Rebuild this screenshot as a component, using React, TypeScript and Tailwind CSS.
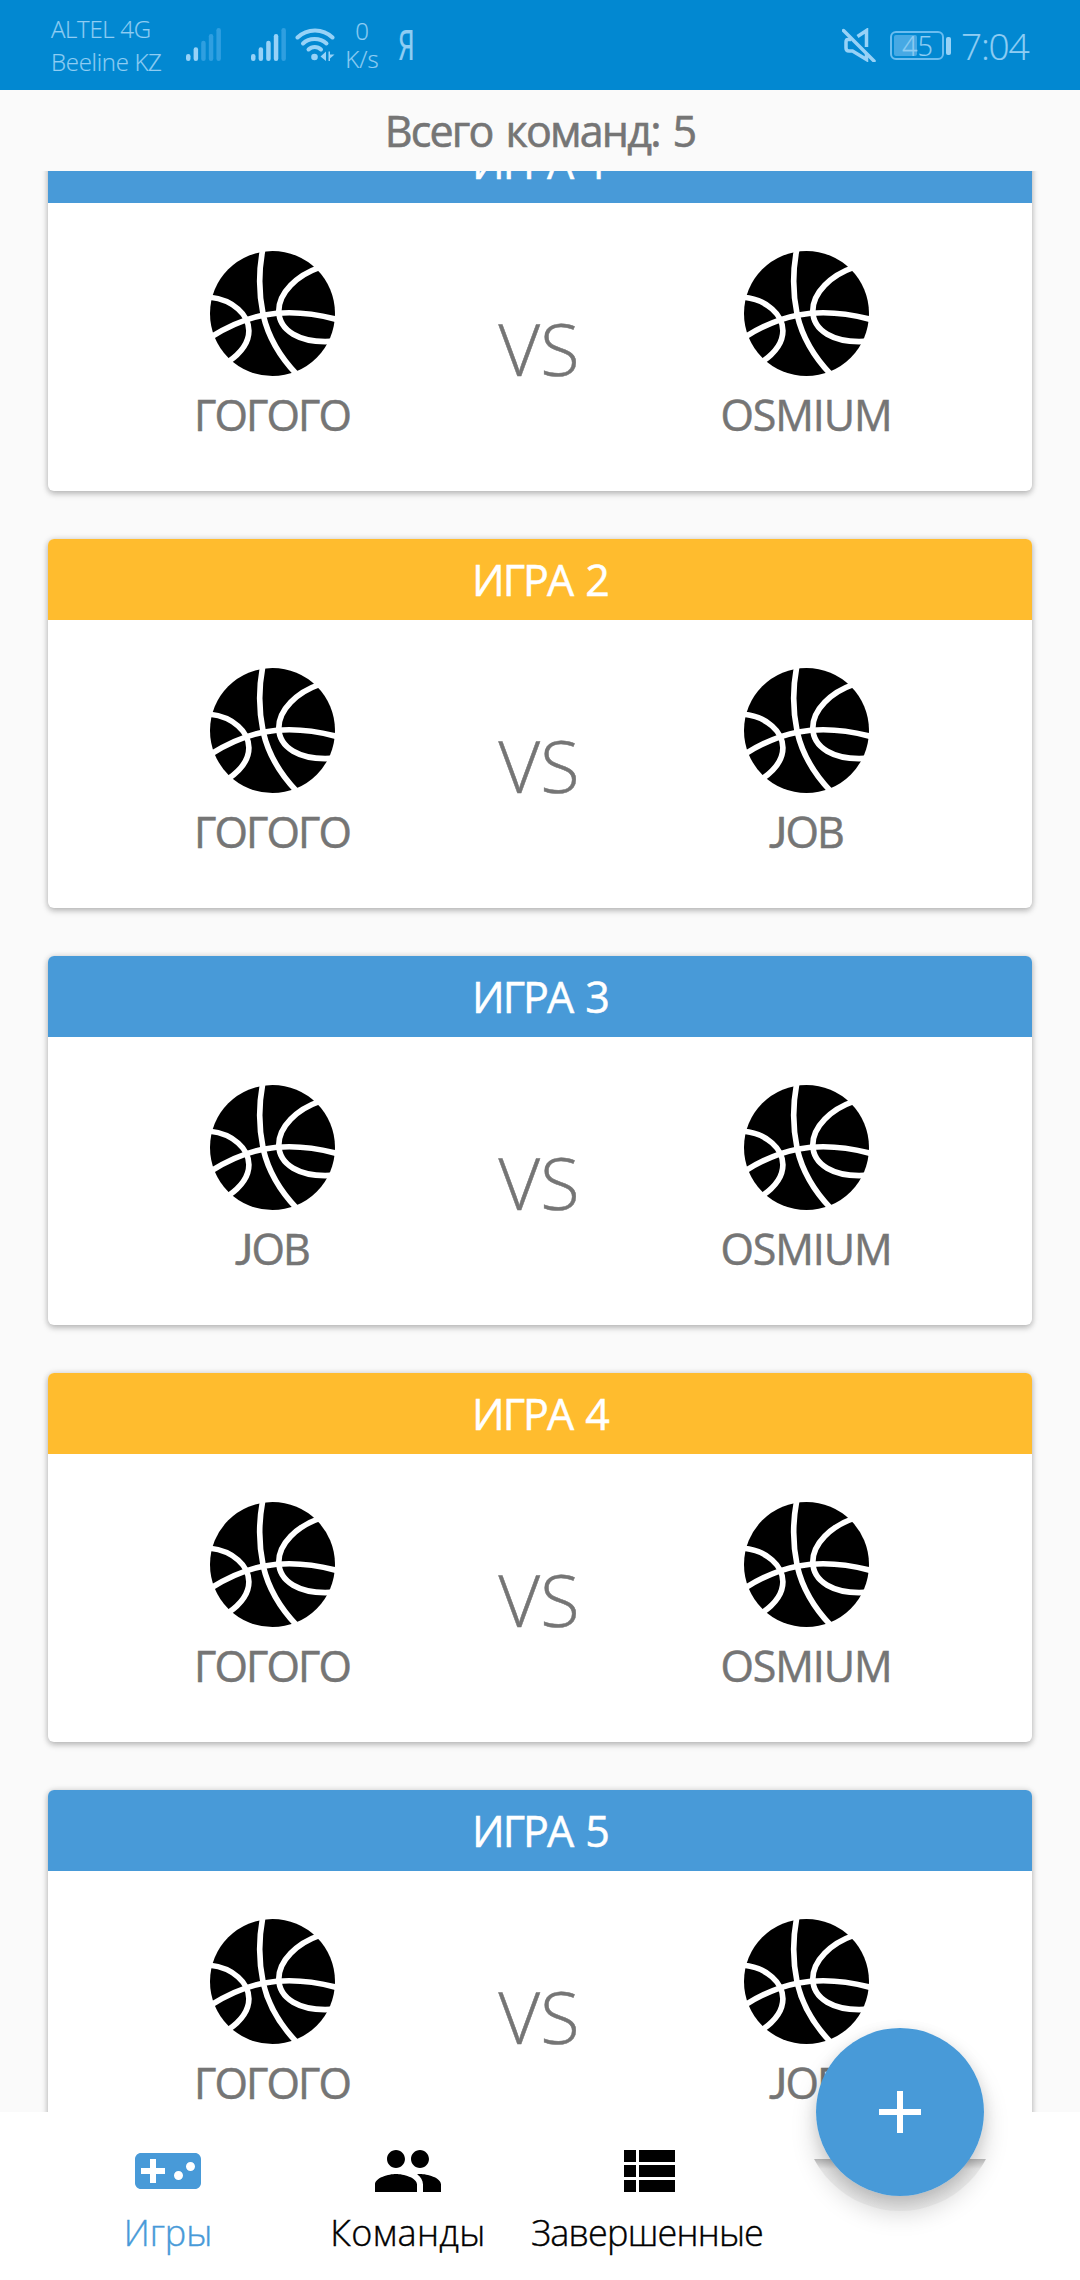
import React from 'react';

const FONT = '"Open Sans", "Noto Sans", sans-serif';

function Ball() {
  return (
    <svg viewBox="0 0 376 376" className="size-[125px]" fill="none">
      <circle cx="188" cy="188" r="188" fill="#000" />
      <g stroke="#fff" strokeWidth="17">
        <path d="M159 -6C146 60 147 130 160 192C176 262 210 318 262 372" />
        <path d="M4 258C100 198 210 160 382 206" />
        <path d="M-2 139C70 146 117 193 117 240C117 280 92 308 54 334" />
        <path d="M328 50C262 73 207 125 207 180C207 240 270 277 364 272" />
      </g>
    </svg>
  );
}

const TRACKING: Record<string, string> = {
  'ГОГОГО': 'tracking-[-1.9px]',
  OSMIUM: 'tracking-[-1.1px]',
  JOB: 'tracking-[-1.8px]',
};

function Team({ name }: { name: string }) {
  return (
    <div className="flex w-[450px] flex-col items-center">
      <Ball />
      <div className={`mt-[10px] text-[43px] leading-[58px] text-[#757575] [-webkit-text-stroke:0.5px_currentColor] ${TRACKING[name]}`}>
        {name[0] === 'J' ? (
          <>
            <span className="font-[Lato]">J</span>
            {name.slice(1)}
          </>
        ) : (
          name
        )}
      </div>
    </div>
  );
}

function Game({ n, a, b }: { n: number; a: string; b: string }) {
  return (
    <div className="h-[369px] shrink-0 rounded-[6px] bg-white shadow-[0_3px_6px_rgba(0,0,0,0.22),0_0_6px_rgba(0,0,0,0.14)]">
      <div className={`flex h-[81px] items-center justify-center rounded-t-[6px] pt-[2px] text-[43px] tracking-[-2px] text-white [word-spacing:4px] [-webkit-text-stroke:0.5px_currentColor] ${n % 2 ? 'bg-[#489ad8]' : 'bg-[#ffbc2e]'}`}>
        <span>{`ИГРА ${n}`}</span>
      </div>
      <div className="-ml-px flex pt-[48px]">
        <Team name={a} />
        <div className="flex w-[84px] justify-center pt-[48px] text-[72px] font-light leading-[98px] text-[#757575] [-webkit-text-stroke:0.5px_currentColor]">VS</div>
        <Team name={b} />
      </div>
    </div>
  );
}

function Signal({ on }: { on: number }) {
  const tops = [26, 19.3, 12.7, 6, 0];
  return (
    <svg viewBox="0 0 35 33" className="h-[33px] w-[35px]">
      {tops.map((t, i) => (
        <rect key={i} x={i * 7.6} y={t} width="4.5" height={33 - t} rx="2.2" fill={i < on ? '#97d2f7' : '#2f9fe0'} />
      ))}
    </svg>
  );
}

function StatusBar() {
  return (
    <div className="flex h-[90px] shrink-0 bg-[#0288d1] font-light text-[#8fcdf3] [-webkit-text-stroke:0.2px_currentColor]">
      <div className="ml-[51px] flex w-[135px] flex-col pt-[12px] text-[24px] leading-[33px] tracking-[-0.3px] whitespace-nowrap">
        <span>ALTEL 4G</span>
        <span>Beeline KZ</span>
      </div>
      <div className="flex w-[65px] pt-[28px]"><Signal on={2} /></div>
      <div className="flex w-[44px] pt-[28px]"><Signal on={4} /></div>
      <svg viewBox="0 0 40 33" className="mt-[28px] h-[33px] w-[40px]" fill="none" stroke="#97d2f7" strokeWidth="4" strokeLinecap="round">
        <path d="M2.5 9.5C12 0 28 0 37.500 9.500" />
        <path d="M8 15.500C14 9.500 25 9.500 31.500 15.500" />
        <path d="M13.500 21.500C17 18 22.500 18 26 21.500" />
        <circle cx="19.500" cy="29" r="3.300" fill="#97d2f7" stroke="none" />
        <path d="M31 23.500V33L25.500 28.500ZM33.500 23.500V33H35V30.500L39.500 26.500H35V23.500Z" fill="#97d2f7" stroke="none" />
      </svg>
      <div className="ml-[6px] flex w-[42px] flex-col items-center pt-[17px] text-[24px] leading-[28px]">
        <span>0</span>
        <span>K/s</span>
      </div>
      <div className="ml-[15px] w-[20px] pt-[18px]">
        <div className="origin-left scale-x-[0.62] font-[Roboto] text-[42px] font-normal leading-[56px]">Я</div>
      </div>
      <svg viewBox="0 0 34 34" className="mt-[28px] ml-auto size-[34px]" fill="none" stroke="#97d2f7" strokeWidth="3.500">
        <path d="M1.500 2.500L32 33" strokeLinecap="round" />
        <path d="M9 11.500H6Q4 11.500 4 14V20Q4 23 7 23H10.500L24.500 31.500V26M15.500 8.500L24.500 2.500V19" />
      </svg>
      <div className="mt-[31px] ml-[14px] flex h-[29px] w-[54px] items-center rounded-[6px] border-2 border-[#6bbdf0] pl-[2px]">
        <div className="h-[21px] w-[23px] shrink-0 rounded-[2px] bg-[#47a9e4]" />
        <div className="-ml-[15px] text-[27px] leading-[29px]">45</div>
      </div>
      <div className="mt-[37px] ml-[2px] h-[18px] w-[5px] rounded-[2px] bg-[#97d2f7]" />
      <div className="mr-[50px] ml-[10px] w-[69px] pt-[21px] text-[37px] leading-[50px] tracking-[-1.2px] whitespace-nowrap">7:04</div>
    </div>
  );
}

function Tab({ label, d, active, tracking = '' }: { label: string; d: string; active?: boolean; tracking?: string }) {
  return (
    <div className={`flex w-[240px] flex-col items-center pt-[23px] ${active ? 'text-[#489ad8]' : 'text-black'}`}>
      <svg viewBox="0 0 24 24" className="size-[72px]" fill="currentColor"><path d={d} /></svg>
      <span className={`mt-px text-[36px] leading-[50px] font-light whitespace-nowrap [-webkit-text-stroke:0.4px_currentColor] ${tracking}`}>{label}</span>
    </div>
  );
}

export default function App() {
  return (
    <div className="relative flex h-[2280px] w-[1080px] flex-col overflow-hidden bg-[#fafafa]" style={{ fontFamily: FONT }}>
      <StatusBar />
      <div className="flex h-[81px] shrink-0 items-center justify-center pt-[2px] text-[43px] tracking-[-1.8px] text-[#757575] [word-spacing:3.5px] [-webkit-text-stroke:0.6px_currentColor]">
        <span>Всего команд: 5</span>
      </div>
      <div className="h-[1941px] shrink-0 overflow-hidden px-[48px]">
        <div className="-mt-[49px] flex flex-col gap-[48px]">
          <Game n={1} a="ГОГОГО" b="OSMIUM" />
          <Game n={2} a="ГОГОГО" b="JOB" />
          <Game n={3} a="JOB" b="OSMIUM" />
          <Game n={4} a="ГОГОГО" b="OSMIUM" />
          <Game n={5} a="ГОГОГО" b="JOB" />
        </div>
      </div>
      <div className="flex h-[168px] shrink-0 bg-white px-[48px]">
        <Tab active label="Игры" d="M21 6H3c-1.100 0-2 .9-2 2v8c0 1.100.9 2 2 2h18c1.100 0 2-.9 2-2V8c0-1.100-.9-2-2-2zm-10 7H8v3H6v-3H3v-2h3V8h2v3h3v2zm4.500 2c-.83 0-1.500-.67-1.500-1.500s.67-1.500 1.500-1.500 1.500.67 1.500 1.500-.67 1.500-1.500 1.500zm4-3c-.83 0-1.500-.67-1.500-1.500S18.670 9 19.500 9s1.500.67 1.500 1.500-.67 1.500-1.500 1.500z" />
        <Tab label="Команды" tracking="tracking-[0.4px]" d="M16 11c1.660 0 2.990-1.340 2.990-3S17.660 5 16 5c-1.660 0-3 1.340-3 3s1.340 3 3 3zm-8 0c1.660 0 2.990-1.340 2.990-3S9.660 5 8 5C6.340 5 5 6.340 5 8s1.340 3 3 3zm0 2c-2.330 0-7 1.170-7 3.500V19h14v-2.500c0-2.330-4.670-3.500-7-3.500zm8 0c-.29 0-.62.020-.97.050 1.160.84 1.970 1.970 1.970 3.450V19h6v-2.500c0-2.330-4.670-3.500-7-3.500z" />
        <Tab label="Завершенные" tracking="tracking-[-0.8px] -ml-[2px]" d="M4 14h4v-4H4v4zm0 5h4v-4H4v4zM4 9h4V5H4v4zm5 5h12v-4H9v4zm0 5h12v-4H9v4zM9 5v4h12V5H9z" />
      </div>
      <div className="absolute top-[2028px] left-[816px] size-[168px]">
        <div className="absolute inset-0 rounded-full shadow-[0_16px_26px_rgba(0,0,0,0.18),0_3px_14px_rgba(0,0,0,0.1)]" />
        <div className="absolute top-[131px] -left-[3px] h-[56px] w-[174px] overflow-hidden">
          <div className="absolute -top-[142px] -left-[10px] size-[194px] rounded-full bg-[linear-gradient(to_bottom,rgba(0,0,0,0.26)_142px,rgba(0,0,0,0.06)_152px,rgba(0,0,0,0.04)_194px)]" />
        </div>
        <div className="absolute inset-0 flex items-center justify-center rounded-full bg-[#489ad8]">
          <svg viewBox="0 0 24 24" className="size-[72px]" fill="#fff"><path d="M19 13h-6v6h-2v-6H5v-2h6V5h2v6h6v2z" /></svg>
        </div>
      </div>
    </div>
  );
}
